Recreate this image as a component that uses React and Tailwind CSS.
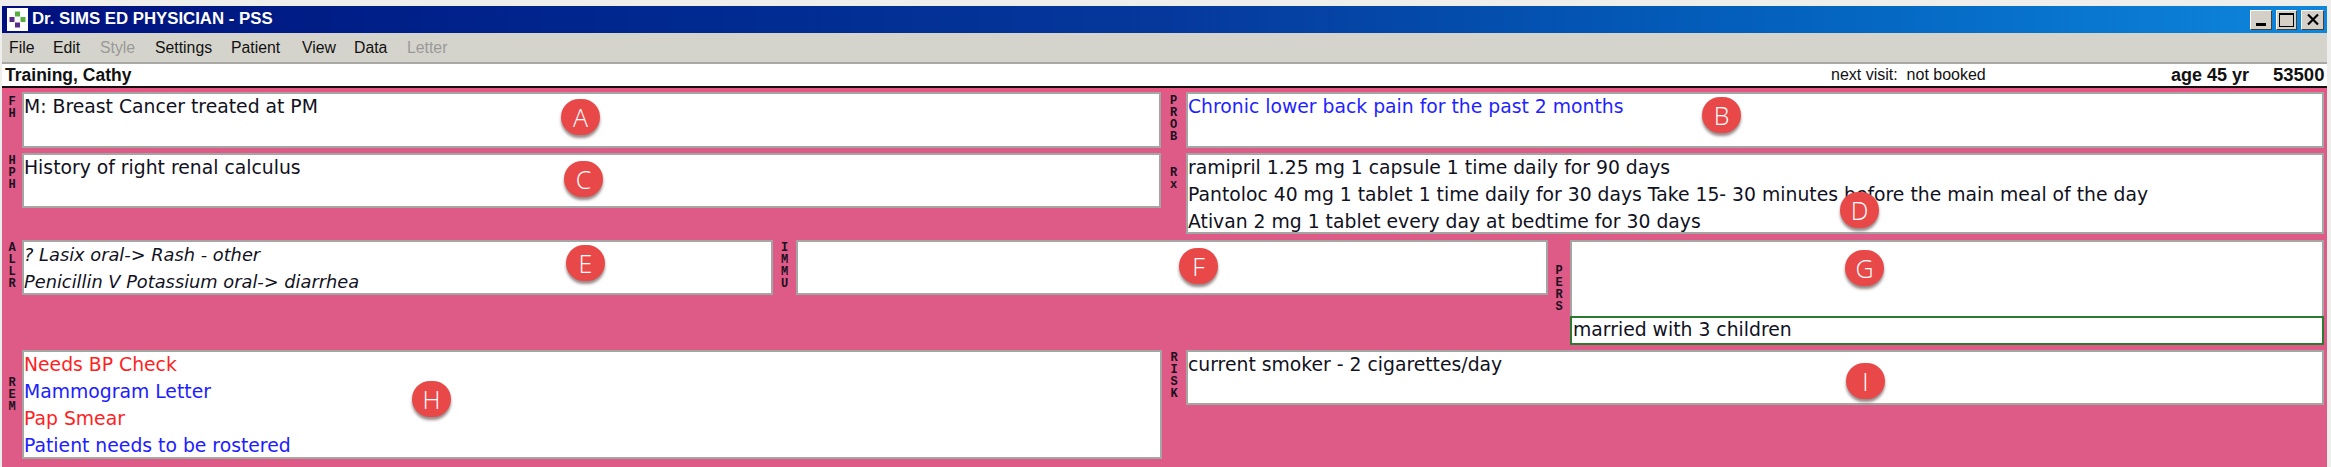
function Badge({ children, className }) {
  return (
    <div className={"absolute w-[39px] h-[36px] rounded-full bg-[#e84848] text-white flex items-center justify-center text-[25px] not-italic font-['Open_Sans',sans-serif] font-light shadow-[0_3px_3px_rgba(70,40,40,0.55)] " + className}>
      {children}
    </div>
  );
}

function Label({ text, className }) {
  return (
    <div className={"shrink-0 flex flex-col items-center font-['Liberation_Mono',monospace] font-bold text-[12px] leading-[12px] text-[#1a1020] " + className}>
      {text.split("").map((c, i) => (
        <span key={i}>{c}</span>
      ))}
    </div>
  );
}

function Box({ className, children }) {
  return (
    <div className={"relative border-2 border-[#a3a6a3] bg-white text-[18.8px] leading-[27px] font-['DejaVu_Sans',sans-serif] whitespace-nowrap " + className}>
      <div className="-mt-[1.5px]">{children}</div>
    </div>
  );
}

function WinButton({ children, className }) {
  return (
    <div className={"relative h-[20px] bg-[#d4d0c8] border border-t-white border-l-white border-r-[#404040] border-b-[#404040] flex items-center justify-center " + className}>
      {children}
    </div>
  );
}

export default function App() {
  const menus = [
    ["File", "w-[44px]", "text-[#111]"],
    ["Edit", "w-[47px]", "text-[#111]"],
    ["Style", "w-[55px]", "text-[#999]"],
    ["Settings", "w-[76px]", "text-[#111]"],
    ["Patient", "w-[71px]", "text-[#111]"],
    ["View", "w-[52px]", "text-[#111]"],
    ["Data", "w-[53px]", "text-[#111]"],
    ["Letter", "w-[50px]", "text-[#999]"],
  ];
  return (
    <div className="w-[2331px] h-[467px] overflow-hidden bg-[#eeeeec] pl-[2px] pr-[4px] pt-[6px] flex flex-col font-['Liberation_Sans',sans-serif]">
      <div className="h-[27px] shrink-0 flex items-center justify-between bg-gradient-to-r from-[#00107e] via-[#06389c] to-[#0f86dc]">
        <div className="flex items-center gap-[4px]">
          <div className="ml-[5px] w-[21px] h-[23px] bg-white flex items-center justify-center">
            <svg width="19" height="19" viewBox="0 0 19 19">
              <rect x="7" y="1.5" width="5" height="5" fill="#55b040" />
              <rect x="12.5" y="7" width="5" height="5" fill="#55b040" />
              <rect x="1.5" y="7" width="5" height="5" fill="#5c2a8a" />
              <rect x="7" y="12.5" width="5" height="5" fill="#5c2a8a" />
            </svg>
          </div>
          <span className="text-white font-bold text-[16.8px] leading-none">Dr. SIMS ED PHYSICIAN - PSS</span>
        </div>
        <div className="flex items-center gap-[4px] mr-[3px]">
          <WinButton className="w-[22px]">
            <span className="absolute left-[5px] bottom-[3px] w-[10px] h-[3px] bg-black" />
          </WinButton>
          <WinButton className="w-[21px]">
            <span className="w-[15px] h-[14px] border border-black border-t-2" />
          </WinButton>
          <WinButton className="w-[23px]">
            <svg width="14" height="13" viewBox="0 0 14 13">
              <path d="M2 1.5 L12 11.5 M12 1.5 L2 11.5" stroke="#000" strokeWidth="2.2" />
            </svg>
          </WinButton>
        </div>
      </div>

      <div className="h-[29px] shrink-0 bg-[#d5d4cc] flex items-center pl-[7px] text-[15.8px]">
        {menus.map(([m, w, c]) => (
          <span key={m} className={w + " " + c}>{m}</span>
        ))}
      </div>

      <div className="h-[2px] shrink-0 bg-[#a8a8a4]" />
      <div className="h-[22px] shrink-0 bg-white flex items-center text-[#111] pl-[3px] pr-[1px]">
        <span className="font-bold w-[1826px] text-[17.5px]">Training, Cathy</span>
        <span className="w-[340px] text-[16px]">next visit:&nbsp;&nbsp;not booked</span>
        <span className="font-bold w-[102px] text-[18px]">age 45 yr</span>
        <span className="font-bold text-[18.5px]">53500</span>
      </div>
      <div className="h-[2px] shrink-0 bg-[#111]" />

      <div className="flex-1 min-h-0 bg-[#de5a87] border-t-4 border-[#e95686] flex flex-col gap-[5px] text-[#111122]">
        <div className="flex h-[56px] shrink-0">
          <div className="flex w-[1159px]">
            <Label text="FH" className="w-[20px] pt-[4px]" />
            <Box className="flex-1 h-[56px]">
              M: Breast Cancer treated at PM
              <Badge className="left-[537px] top-[5px]">A</Badge>
            </Box>
          </div>
          <div className="flex flex-1 pr-[3px]">
            <Label text="PROB" className="w-[25px] pt-[3px]" />
            <Box className="flex-1 h-[56px] text-[#1f1fff]">
              Chronic lower back pain for the past 2 months
              <Badge className="left-[514px] top-[3px]">B</Badge>
            </Box>
          </div>
        </div>

        <div className="flex h-[81px] shrink-0">
          <div className="flex w-[1159px] items-start">
            <Label text="HPH" className="w-[20px] pt-[2px]" />
            <Box className="flex-1 h-[55px]">
              History of right renal calculus
              <Badge className="left-[540px] top-[6px]">C</Badge>
            </Box>
          </div>
          <div className="flex flex-1 pr-[3px]">
            <Label text="Rx" className="w-[25px] pt-[14px]" />
            <Box className="flex-1 h-[81px]">
              <div>ramipril 1.25 mg 1 capsule 1 time daily for 90 days</div>
              <div>Pantoloc 40 mg 1 tablet 1 time daily for 30 days Take 15- 30 minutes before the main meal of the day</div>
              <div>Ativan 2 mg 1 tablet every day at bedtime for 30 days</div>
              <Badge className="left-[652px] top-[37px]">D</Badge>
            </Box>
          </div>
        </div>

        <div className="flex h-[105px] shrink-0 items-start pt-[1px]">
          <div className="flex w-[771px]">
            <Label text="ALLR" className="w-[20px] pt-[2px]" />
            <Box className="flex-1 h-[55px] italic">
              <div className="text-[17.8px]">? Lasix oral-&gt; Rash - other</div>
              <div className="text-[17.8px]">Penicillin V Potassium oral-&gt; diarrhea</div>
              <Badge className="left-[542px] top-[3px]">E</Badge>
            </Box>
          </div>
          <div className="flex w-[775px]">
            <Label text="IMMU" className="w-[23px] pt-[2px]" />
            <Box className="w-[752px] h-[55px]">
              <Badge className="left-[381px] top-[6px]">F</Badge>
            </Box>
          </div>
          <div className="flex flex-1 pr-[3px]">
            <Label text="PERS" className="w-[22px] pt-[25px]" />
            <div className="flex-1 flex flex-col">
              <Box className="h-[76px] border-b-0">
                <Badge className="left-[273px] top-[8px]">G</Badge>
              </Box>
              <div className="h-[29px] border-2 border-[#2b7a2f] bg-white pl-[1px] text-[18.8px] leading-[24px] font-['DejaVu_Sans',sans-serif]">
                married with 3 children
              </div>
            </div>
          </div>
        </div>

        <div className="flex flex-1 min-h-0 mt-[1px]">
          <div className="flex w-[1160px] items-start">
            <Label text="REM" className="w-[20px] pt-[27px]" />
            <Box className="w-[1140px] h-[109px]">
              <div className="text-[#ff1f1f]">Needs BP Check</div>
              <div className="text-[#2020ff]">Mammogram Letter</div>
              <div className="text-[#ff1f1f]">Pap Smear</div>
              <div className="text-[#2020ff]">Patient needs to be rostered</div>
              <Badge className="left-[388px] top-[29px]">H</Badge>
            </Box>
          </div>
          <div className="flex flex-1 pr-[3px] items-start">
            <Label text="RISK" className="w-[24px] pt-[2px]" />
            <Box className="flex-1 h-[55px]">
              current smoker - 2 cigarettes/day
              <Badge className="left-[658px] top-[11px]">I</Badge>
            </Box>
          </div>
        </div>
      </div>
    </div>
  );
}
